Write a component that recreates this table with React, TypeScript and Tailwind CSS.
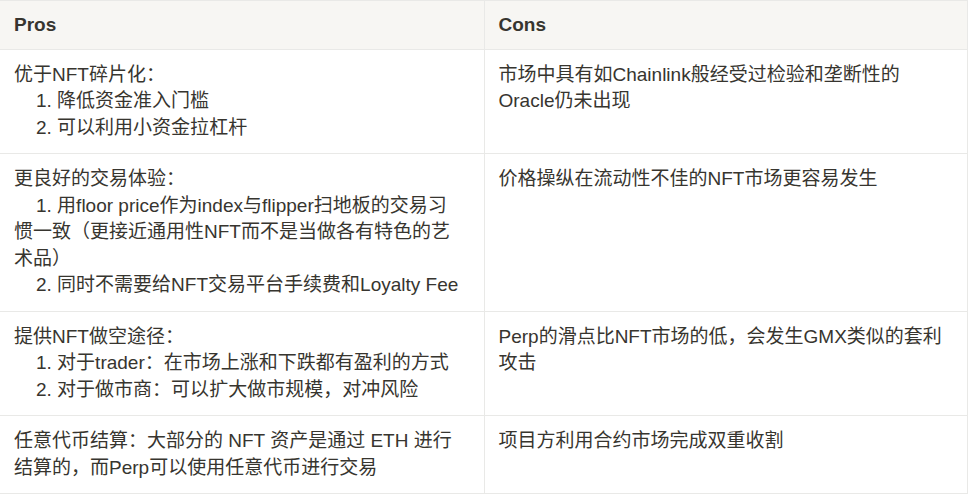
import React from 'react';

const font = { fontFamily: '"Liberation Sans", "Noto Sans CJK SC", sans-serif' };

const Indent = () => <span className="inline-block w-[22px]" />;

type Row = { pros: React.ReactNode; cons: React.ReactNode };

const rows: Row[] = [
  {
    pros: (
      <>
        优于NFT碎片化：
        <br />
        <Indent />1. 降低资金准入门槛
        <br />
        <Indent />2. 可以利用小资金拉杠杆
      </>
    ),
    cons: (
      <>
        市场中具有如Chainlink般经受过检验和垄断性的
        <br />
        Oracle仍未出现
      </>
    ),
  },
  {
    pros: (
      <>
        更良好的交易体验：
        <br />
        <Indent />1. 用floor price作为index与flipper扫地板的交易习
        <br />
        惯一致（更接近通用性NFT而不是当做各有特色的艺
        <br />
        术品）
        <br />
        <Indent />2. 同时不需要给NFT交易平台手续费和Loyalty Fee
      </>
    ),
    cons: <>价格操纵在流动性不佳的NFT市场更容易发生</>,
  },
  {
    pros: (
      <>
        提供NFT做空途径：
        <br />
        <Indent />1. 对于trader：在市场上涨和下跌都有盈利的方式
        <br />
        <Indent />2. 对于做市商：可以扩大做市规模，对冲风险
      </>
    ),
    cons: (
      <>
        Perp的滑点比NFT市场的低，会发生GMX类似的套利
        <br />
        攻击
      </>
    ),
  },
  {
    pros: (
      <>
        任意代币结算：大部分的 NFT 资产是通过 ETH 进行
        <br />
        结算的，而Perp可以使用任意代币进行交易
      </>
    ),
    cons: <>项目方利用合约市场完成双重收割</>,
  },
];

export default function App() {
  return (
    <div className="bg-white w-[972px] h-[495px] overflow-hidden" style={font}>
      <table className="w-[968px] table-fixed border-collapse text-[19px] leading-[26.5px] text-[#37352f]">
        <colgroup>
          <col className="w-[484px]" />
          <col />
        </colgroup>
        <thead>
          <tr className="bg-[#f7f6f3]">
            <th className="border border-l-0 border-[#e9e9e7] px-[14px] py-[10.5px] text-left font-semibold">
              Pros
            </th>
            <th className="border border-[#e9e9e7] px-[14px] py-[10.5px] text-left font-semibold">
              Cons
            </th>
          </tr>
        </thead>
        <tbody>
          {rows.map((r, i) => (
            <tr key={i}>
              <td className="border border-l-0 border-[#e9e9e7] px-[14px] py-[12px] align-top">
                {r.pros}
              </td>
              <td className="border border-[#e9e9e7] px-[14px] py-[12px] align-top">{r.cons}</td>
            </tr>
          ))}
        </tbody>
      </table>
    </div>
  );
}
